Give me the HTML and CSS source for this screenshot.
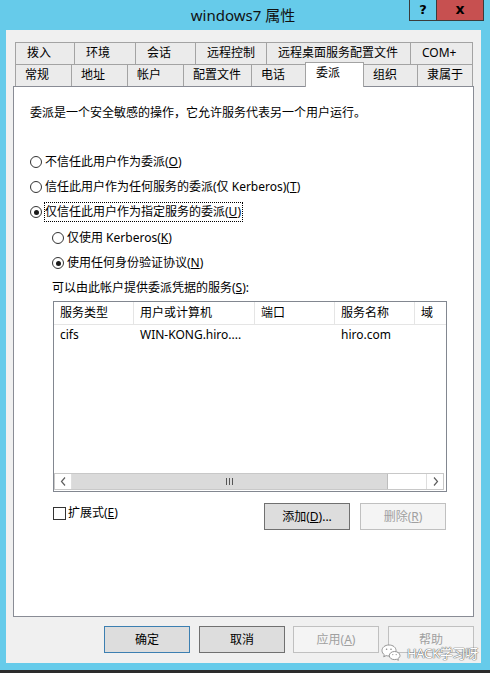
FILE: index.html
```html
<!DOCTYPE html>
<html lang="zh-CN">
<head>
<meta charset="utf-8">
<title>windows7 属性</title>
<link rel="stylesheet" href="styles.css">
</head>
<body>
<div class="screen">
  <div class="titlebar">
    <div class="title">windows7 属性</div>
    <div class="caption">
      <div class="cap-btn cap-help">?</div>
      <div class="cap-btn cap-close">x</div>
    </div>
  </div>

  <div class="dialog">
    <div class="tabs">
      <div class="tab-row row1">
        <div class="tab t60">拨入</div>
        <div class="tab t62">环境</div>
        <div class="tab t61">会话</div>
        <div class="tab t72">远程控制</div>
        <div class="tab t145">远程桌面服务配置文件</div>
        <div class="tab t63">COM+</div>
      </div>
      <div class="tab-row row2">
        <div class="tab t57">常规</div>
        <div class="tab t57">地址</div>
        <div class="tab t57">帐户</div>
        <div class="tab t69">配置文件</div>
        <div class="tab t55">电话</div>
        <div class="tab t59 active">委派</div>
        <div class="tab t55">组织</div>
        <div class="tab t56">隶属于</div>
      </div>
    </div>

    <div class="page">
      <div class="desc">委派是一个安全敏感的操作，它允许服务代表另一个用户运行。</div>

      <div class="options">
        <div class="radio"><span class="dot"></span><span class="label">不信任此用户作为委派(<u>O</u>)</span></div>
        <div class="radio"><span class="dot"></span><span class="label">信任此用户作为任何服务的委派(仅 Kerberos)(<u>T</u>)</span></div>
        <div class="radio"><span class="dot checked"></span><span class="label focus">仅信任此用户作为指定服务的委派(<u>U</u>)</span></div>
      </div>

      <div class="sub-options">
        <div class="radio"><span class="dot"></span><span class="label">仅使用 Kerberos(<u>K</u>)</span></div>
        <div class="radio"><span class="dot checked"></span><span class="label">使用任何身份验证协议(<u>N</u>)</span></div>
      </div>

      <div class="list-label">可以由此帐户提供委派凭据的服务(<u>S</u>):</div>

      <div class="listview">
        <div class="lv-head">
          <div class="lv-col c1">服务类型</div>
          <div class="lv-col c2">用户或计算机</div>
          <div class="lv-col c3">端口</div>
          <div class="lv-col c4">服务名称</div>
          <div class="lv-col c5">域</div>
        </div>
        <div class="lv-row">
          <div class="lv-cell c1">cifs</div>
          <div class="lv-cell c2">WIN-KONG.hiro....</div>
          <div class="lv-cell c3"></div>
          <div class="lv-cell c4">hiro.com</div>
          <div class="lv-cell c5"></div>
        </div>
        <div class="lv-fill"></div>
        <div class="hscroll">
          <div class="sb-arrow">
            <svg width="7" height="9" viewBox="0 0 7 9"><path d="M5 0.5 L1.5 4.5 L5 8.5" fill="none" stroke="#606060" stroke-width="1.2"/></svg>
          </div>
          <div class="sb-thumb"><span class="grip"></span><span class="grip"></span><span class="grip"></span></div>
          <div class="sb-track"></div>
          <div class="sb-arrow right">
            <svg width="7" height="9" viewBox="0 0 7 9"><path d="M2 0.5 L5.5 4.5 L2 8.5" fill="none" stroke="#606060" stroke-width="1.2"/></svg>
          </div>
        </div>
      </div>

      <div class="list-actions">
        <div class="check"><span class="box"></span><span class="label">扩展式(<u>E</u>)</span></div>
        <div class="btn"><span class="btn-text">添加(<u>D</u>)...</span></div>
        <div class="btn disabled"><span class="btn-text">删除(<u>R</u>)</span></div>
      </div>
    </div>

    <div class="footer">
      <div class="btn default"><span class="btn-text">确定</span></div>
      <div class="btn"><span class="btn-text">取消</span></div>
      <div class="btn disabled"><span class="btn-text">应用(<u>A</u>)</span></div>
      <div class="btn disabled"><span class="btn-text">帮助</span></div>
    </div>
  </div>
  <div class="frame-gap"></div>
  <div class="bottom-line"></div>

  <div class="watermark">
    <svg class="wm-icon" width="20" height="17" viewBox="0 0 20 17">
      <path d="M8 1 C3.8 1 1 3.6 1 6.6 C1 8.3 1.9 9.7 3.3 10.7 L2.7 12.8 L5.2 11.6 C6 11.9 7 12 8 12 C12.2 12 15 9.5 15 6.5 C15 3.6 12.2 1 8 1 Z" fill="#fff" stroke="#8a8a8a" stroke-width="0.9"/>
      <path d="M13.5 7.5 C10.4 7.5 8.3 9.4 8.3 11.6 C8.3 13.8 10.4 15.6 13.5 15.6 C14.2 15.6 14.8 15.5 15.4 15.3 L17.4 16.3 L16.9 14.6 C18.2 13.8 19 12.8 19 11.6 C19 9.4 16.7 7.5 13.5 7.5 Z" fill="#fff" stroke="#8a8a8a" stroke-width="0.9"/>
      <circle cx="5.6" cy="5.2" r="0.8" fill="#8a8a8a"/>
      <circle cx="10" cy="5.2" r="0.8" fill="#8a8a8a"/>
      <circle cx="11.8" cy="10.6" r="0.6" fill="#8a8a8a"/>
      <circle cx="15.2" cy="10.6" r="0.6" fill="#8a8a8a"/>
    </svg>
    <span class="wm-text">HACK学习呀</span>
  </div>
</div>
</body>
</html>
```

FILE: styles.css
```css
* { box-sizing: border-box; }

html, body {
  margin: 0;
  padding: 0;
}

body {
  width: 490px;
  height: 673px;
  overflow: hidden;
  background: #66cbea;
  font-family: "Noto Sans", "Noto Sans CJK SC", sans-serif;
  font-size: 12px;
  color: #000;
}

u { text-decoration: underline; text-underline-offset: 1px; }

.screen {
  position: relative;
  width: 490px;
  height: 673px;
}

/* ---------- title bar ---------- */
.titlebar {
  position: relative;
  height: 30px;
}

.title {
  text-align: center;
  font-size: 15px;
  line-height: 30px;
  padding-right: 4px;
  color: #111;
}

.caption {
  position: absolute;
  top: 0;
  right: 6px;
  display: flex;
}

.cap-btn {
  height: 21px;
  border: 1px solid #3b3b3b;
  border-top: none;
  font-weight: bold;
  text-align: center;
  font-family: "DejaVu Sans", sans-serif;
}

.cap-help {
  width: 28px;
  font-size: 13px;
  line-height: 20px;
  background: #66cbea;
}

.cap-close {
  width: 47px;
  border-left: none;
  background: #c75050;
  font-size: 14px;
  line-height: 18px;
}

/* ---------- dialog ---------- */
.dialog {
  margin-left: 6px;
  width: 475px;
  height: 633px;
  background: #f0f0f0;
  padding: 12px 0 0 7px;
}

.frame-gap { height: 7px; }

.bottom-line {
  height: 3px;
  background: #2c2c2c;
}

/* ---------- tabs ---------- */
.tabs {
  margin-left: 2px;
}

.tab-row {
  display: flex;
  height: 22px;
}

.tab {
  height: 22px;
  border: 1px solid #a3a3a3;
  border-bottom: none;
  margin-right: -1px;
  background: #ebebeb;
  line-height: 20px;
  padding-left: 11px;
  white-space: nowrap;
}

.row2 .tab { padding-left: 9px; }

.tab.active {
  position: relative;
  z-index: 2;
  margin-top: -2px;
  height: 25px;
  background: #fff;
  padding-left: 10px;
}

.t55 { width: 55px; }
.t56 { width: 56px; }
.t57 { width: 57px; }
.t59 { width: 59px; }
.t60 { width: 60px; }
.t61 { width: 61px; }
.t62 { width: 62px; }
.t63 { width: 63px; }
.t69 { width: 69px; }
.t72 { width: 72px; }
.t145 { width: 145px; }

/* ---------- tab page ---------- */
.page {
  width: 461px;
  height: 531px;
  background: #fff;
  border: 1px solid #898c95;
  padding: 16px 0 0 16px;
}

.desc {
  line-height: 20px;
  white-space: nowrap;
}

.options {
  margin-top: 29px;
  display: flex;
  flex-direction: column;
  gap: 5px;
}

.radio {
  display: flex;
  align-items: center;
  height: 20px;
  white-space: nowrap;
}

.dot {
  position: relative;
  width: 12px;
  height: 12px;
  border: 1px solid #333;
  border-radius: 50%;
  background: #fff;
  margin-right: 3px;
  flex: none;
}

.dot.checked::after {
  content: "";
  position: absolute;
  left: 2.5px;
  top: 2.5px;
  width: 5px;
  height: 5px;
  border-radius: 50%;
  background: #1a1a1a;
}

.label { line-height: 20px; }

.label.focus {
  margin-left: -1px;
  border: 1px dotted #000;
  line-height: 18px;
  height: 20px;
  padding: 0 1px 0 0;
}

.sub-options {
  margin: 6px 0 0 22px;
  display: flex;
  flex-direction: column;
  gap: 5px;
}

.list-label {
  margin: 5px 0 0 22px;
  line-height: 20px;
}

/* ---------- list view ---------- */
.listview {
  margin: 3px 0 0 23px;
  width: 394px;
  height: 191px;
  border: 1px solid #828790;
  display: flex;
  flex-direction: column;
  overflow: hidden;
}

.lv-head {
  display: flex;
  height: 23px;
  border-bottom: 1px solid #e5e5e5;
  flex: none;
}

.lv-col {
  border-right: 1px solid #e5e5e5;
  padding-left: 6px;
  line-height: 22px;
  white-space: nowrap;
  flex: none;
}

.lv-row {
  display: flex;
  height: 20px;
  flex: none;
}

.lv-cell {
  padding-left: 6px;
  line-height: 19px;
  white-space: nowrap;
  flex: none;
}

.c1 { width: 80px; }
.c2 { width: 121px; }
.c3 { width: 80px; }
.c4 { width: 80px; }
.c5 { width: 40px; border-right: none; }

.lv-fill { flex: 1; }

.hscroll {
  flex: none;
  display: flex;
  height: 17px;
  margin: 0 2px 1px 0;
  border: 1px solid #c8c8c8;
  background: #fff;
}

.sb-arrow {
  width: 17px;
  display: flex;
  align-items: center;
  justify-content: center;
  background: #fff;
  border-right: 1px solid #dedede;
  flex: none;
}

.sb-arrow.right {
  border-right: none;
  border-left: 1px solid #dedede;
}

.sb-thumb {
  width: 316px;
  background: #dadada;
  border-right: 1px solid #bdbdbd;
  display: flex;
  align-items: center;
  justify-content: center;
  gap: 1px;
  flex: none;
}

.grip {
  width: 1px;
  height: 7px;
  background: #555;
  margin: 0 0.5px;
}

.sb-track { flex: 1; }

/* ---------- actions ---------- */
.list-actions {
  margin: 11px 0 0 23px;
  width: 394px;
  display: flex;
  align-items: flex-start;
  gap: 10px;
}

.check {
  display: flex;
  align-items: center;
  height: 20px;
  margin-right: auto;
  white-space: nowrap;
}

.box {
  width: 13px;
  height: 13px;
  border: 1px solid #333;
  background: #fff;
  margin-right: 2px;
}

.btn {
  width: 86px;
  height: 27px;
  border: 1px solid #707070;
  background: #dddddd;
  display: flex;
  align-items: center;
  justify-content: center;
  white-space: nowrap;
  flex: none;
}

.btn-text {
  line-height: 12px;
}

.list-actions .btn:last-child { margin-right: 1px; }

.btn.disabled {
  border-color: #c0c0c0;
  background: #f4f4f4;
  color: #a0a0a0;
}

.btn.default {
  border-color: #3c7fb1;
}

/* ---------- footer ---------- */
.footer {
  display: flex;
  margin: 9px 0 0 91px;
}

.footer .btn:nth-child(2) { margin-left: 9px; }
.footer .btn:nth-child(3) { margin-left: 8px; }
.footer .btn:nth-child(4) { margin-left: 9px; }

/* ---------- watermark overlay ---------- */
.watermark {
  position: absolute;
  left: 381px;
  top: 644px;
  display: flex;
  align-items: center;
  gap: 6px;
}

.wm-text {
  font-size: 13px;
  line-height: 12px;
  color: #fff;
  letter-spacing: -0.3px;
  text-shadow: 0 0 1px #666, 0 0 1px #666, 0 0 1px #666;
}
```
